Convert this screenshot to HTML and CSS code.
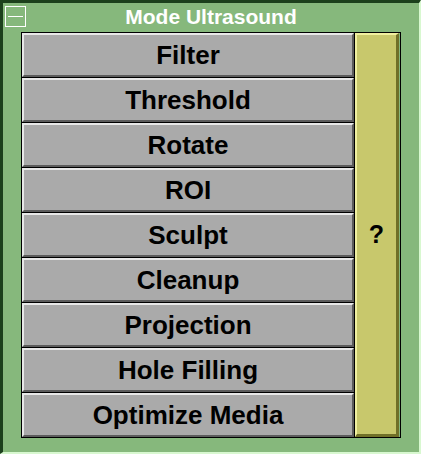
FILE: index.html
```html
<!DOCTYPE html>
<html>
<head>
    <title>Mode Ultrasound</title>
    <link rel="stylesheet" href="styles.css">
</head>
<body>
    <div class="shell">
        <div class="titlebar">
            <span class="menu-btn"><span class="menu-bar"></span></span>
            <span class="title">Mode Ultrasound</span>
            <span></span>
        </div>
        <div class="panel">
            <div class="actions">
                <button class="action">Filter</button>
                <button class="action">Threshold</button>
                <button class="action">Rotate</button>
                <button class="action">ROI</button>
                <button class="action">Sculpt</button>
                <button class="action">Cleanup</button>
                <button class="action">Projection</button>
                <button class="action">Hole Filling</button>
                <button class="action">Optimize Media</button>
            </div>
            <button class="help">?</button>
        </div>
    </div>
</body>
</html>
```

FILE: styles.css
```css
body {
    margin: 0;
    font-family: "Liberation Sans", Arial, sans-serif;
    background-color: #86b87c;
}

.shell {
    width: 421px;
    height: 454px;
    box-sizing: border-box;
    background-color: #86b87c;
    border-style: solid;
    border-width: 3px 2px 2px 3px;
    border-color: #1c401c #d8f8d0 #d8f8d0 #1c401c;
}

.titlebar {
    display: grid;
    grid-template-columns: 24px 1fr 24px;
    align-items: center;
    height: 29px;
}

.menu-btn {
    display: flex;
    align-items: center;
    justify-content: center;
    width: 19px;
    height: 19px;
    margin: 0 0 2px 2px;
    border: 1px solid #ffffff;
}

.menu-bar {
    width: 15px;
    height: 1px;
    background-color: #ffffff;
}

.title {
    text-align: center;
    color: #ffffff;
    font-weight: bold;
    font-size: 21px;
    margin-bottom: 2px;
}

.panel {
    display: flex;
    margin: 0 18px;
    border: 1px solid #000000;
    height: 404px;
}

.actions {
    display: flex;
    flex-direction: column;
    width: 332px;
    border-right: 1px solid #000000;
}

.action {
    height: 44px;
    flex: none;
    margin: 0;
    padding: 0;
    box-sizing: border-box;
    background-color: #aaaaaa;
    border-style: solid;
    border-width: 2px 2px 2px 2px;
    border-color: #e8e8e8 #5c5c5c #5c5c5c #e8e8e8;
    font-family: "Liberation Sans", Arial, sans-serif;
    font-weight: bold;
    font-size: 26px;
    color: #000000;
}

.action + .action {
    margin-top: 1px;
}

.actions .action:not(:last-child) {
    box-shadow: 0 1px 0 #000000;
}

.help {
    width: 44px;
    margin: 0;
    padding: 0;
    box-sizing: border-box;
    background-color: #c8c86c;
    border-style: solid;
    border-width: 2px 3px 3px 2px;
    border-color: #f0f0a0 #707028 #707028 #f0f0a0;
    font-family: "Liberation Sans", Arial, sans-serif;
    font-weight: bold;
    font-size: 25px;
    color: #000000;
}
```
